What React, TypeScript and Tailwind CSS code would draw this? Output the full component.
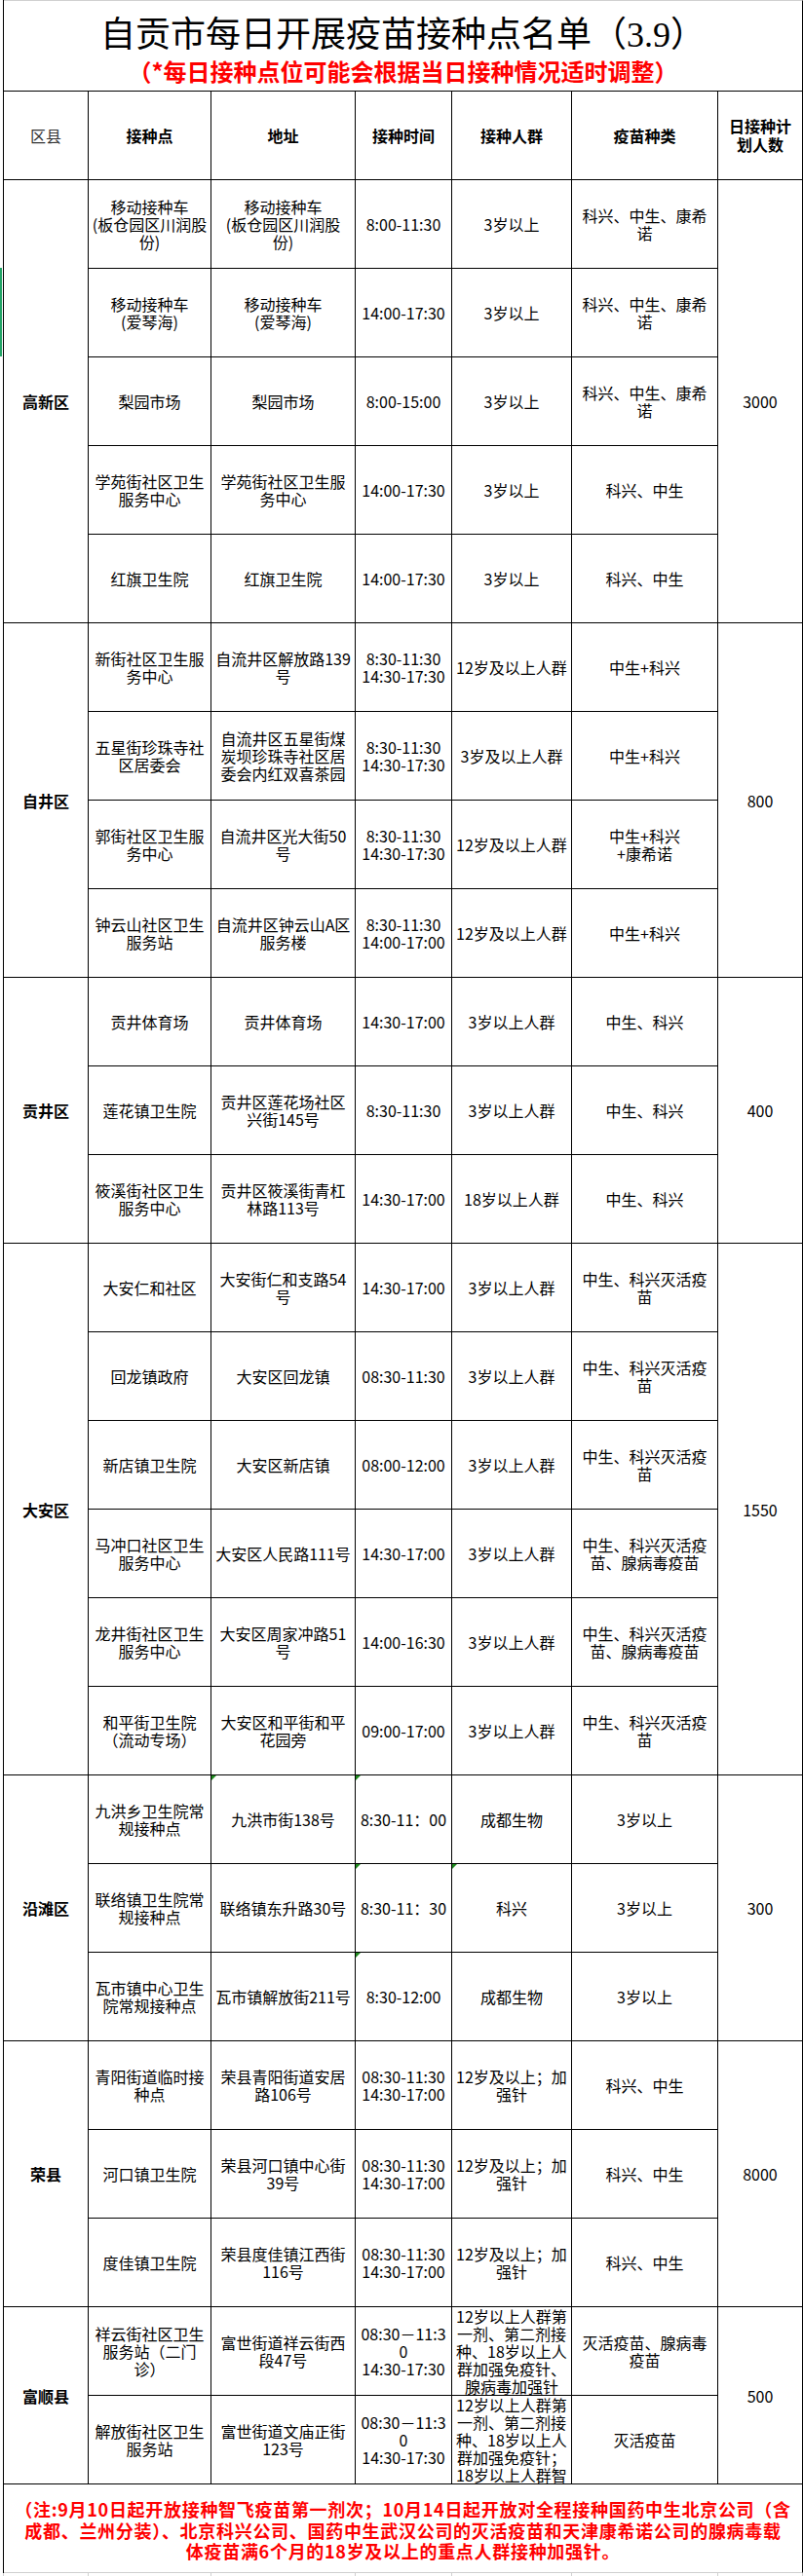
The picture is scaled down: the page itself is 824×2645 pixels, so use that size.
import React from 'react';

type Row = {
  site: string;
  addr: string;
  time: string;
  people: string;
  vaccine: string;
  marks?: number[]; // column index (0-4) with a green "number as text" corner
};

type Section = { district: string; count: string; rows: Row[] };

// lines are split on "|" so wrapping matches the sheet exactly
const SECTIONS: Section[] = [
  {
    district: '高新区', count: '3000', rows: [
      { site: '移动接种车|(板仓园区川润股|份)', addr: '移动接种车|(板仓园区川润股|份)', time: '8:00-11:30', people: '3岁以上', vaccine: '科兴、中生、康希|诺' },
      { site: '移动接种车|(爱琴海)', addr: '移动接种车|(爱琴海)', time: '14:00-17:30', people: '3岁以上', vaccine: '科兴、中生、康希|诺' },
      { site: '梨园市场', addr: '梨园市场', time: '8:00-15:00', people: '3岁以上', vaccine: '科兴、中生、康希|诺' },
      { site: '学苑街社区卫生|服务中心', addr: '学苑街社区卫生服|务中心', time: '14:00-17:30', people: '3岁以上', vaccine: '科兴、中生' },
      { site: '红旗卫生院', addr: '红旗卫生院', time: '14:00-17:30', people: '3岁以上', vaccine: '科兴、中生' },
    ],
  },
  {
    district: '自井区', count: '800', rows: [
      { site: '新街社区卫生服|务中心', addr: '自流井区解放路139|号', time: '8:30-11:30|14:30-17:30', people: '12岁及以上人群', vaccine: '中生+科兴' },
      { site: '五星街珍珠寺社|区居委会', addr: '自流井区五星街煤|炭坝珍珠寺社区居|委会内红双喜茶园', time: '8:30-11:30|14:30-17:30', people: '3岁及以上人群', vaccine: '中生+科兴' },
      { site: '郭街社区卫生服|务中心', addr: '自流井区光大街50|号', time: '8:30-11:30|14:30-17:30', people: '12岁及以上人群', vaccine: '中生+科兴|+康希诺' },
      { site: '钟云山社区卫生|服务站', addr: '自流井区钟云山A区|服务楼', time: '8:30-11:30|14:00-17:00', people: '12岁及以上人群', vaccine: '中生+科兴' },
    ],
  },
  {
    district: '贡井区', count: '400', rows: [
      { site: '贡井体育场', addr: '贡井体育场', time: '14:30-17:00', people: '3岁以上人群', vaccine: '中生、科兴' },
      { site: '莲花镇卫生院', addr: '贡井区莲花场社区|兴街145号', time: '8:30-11:30', people: '3岁以上人群', vaccine: '中生、科兴' },
      { site: '筱溪街社区卫生|服务中心', addr: '贡井区筱溪街青杠|林路113号', time: '14:30-17:00', people: '18岁以上人群', vaccine: '中生、科兴' },
    ],
  },
  {
    district: '大安区', count: '1550', rows: [
      { site: '大安仁和社区', addr: '大安街仁和支路54|号', time: '14:30-17:00', people: '3岁以上人群', vaccine: '中生、科兴灭活疫|苗' },
      { site: '回龙镇政府', addr: '大安区回龙镇', time: '08:30-11:30', people: '3岁以上人群', vaccine: '中生、科兴灭活疫|苗' },
      { site: '新店镇卫生院', addr: '大安区新店镇', time: '08:00-12:00', people: '3岁以上人群', vaccine: '中生、科兴灭活疫|苗' },
      { site: '马冲口社区卫生|服务中心', addr: '大安区人民路111号', time: '14:30-17:00', people: '3岁以上人群', vaccine: '中生、科兴灭活疫|苗、腺病毒疫苗' },
      { site: '龙井街社区卫生|服务中心', addr: '大安区周家冲路51|号', time: '14:00-16:30', people: '3岁以上人群', vaccine: '中生、科兴灭活疫|苗、腺病毒疫苗' },
      { site: '和平街卫生院|（流动专场）', addr: '大安区和平街和平|花园旁', time: '09:00-17:00', people: '3岁以上人群', vaccine: '中生、科兴灭活疫|苗' },
    ],
  },
  {
    district: '沿滩区', count: '300', rows: [
      { site: '九洪乡卫生院常|规接种点', addr: '九洪市街138号', time: '8:30-11：00', people: '成都生物', vaccine: '3岁以上', marks: [1, 2] },
      { site: '联络镇卫生院常|规接种点', addr: '联络镇东升路30号', time: '8:30-11：30', people: '科兴', vaccine: '3岁以上', marks: [2, 3] },
      { site: '瓦市镇中心卫生|院常规接种点', addr: '瓦市镇解放街211号', time: '8:30-12:00', people: '成都生物', vaccine: '3岁以上', marks: [2] },
    ],
  },
  {
    district: '荣县', count: '8000', rows: [
      { site: '青阳街道临时接|种点', addr: '荣县青阳街道安居|路106号', time: '08:30-11:30|14:30-17:00', people: '12岁及以上；加|强针', vaccine: '科兴、中生' },
      { site: '河口镇卫生院', addr: '荣县河口镇中心街|39号', time: '08:30-11:30|14:30-17:00', people: '12岁及以上；加|强针', vaccine: '科兴、中生' },
      { site: '度佳镇卫生院', addr: '荣县度佳镇江西街|116号', time: '08:30-11:30|14:30-17:00', people: '12岁及以上；加|强针', vaccine: '科兴、中生' },
    ],
  },
  {
    district: '富顺县', count: '500', rows: [
      { site: '祥云街社区卫生|服务站（二门|诊）', addr: '富世街道祥云街西|段47号', time: '08:30－11:3|0|14:30-17:30', people: '12岁以上人群第|一剂、第二剂接|种、18岁以上人|群加强免疫针、|腺病毒加强针', vaccine: '灭活疫苗、腺病毒|疫苗' },
      { site: '解放街社区卫生|服务站', addr: '富世街道文庙正街|123号', time: '08:30－11:3|0|14:30-17:30', people: '12岁以上人群第|一剂、第二剂接|种、18岁以上人|群加强免疫针；|18岁以上人群智', vaccine: '灭活疫苗' },
    ],
  },
];

const MID_COLS = ['w-[126px]', 'w-[148px]', 'w-[99px]', 'w-[123px]', 'w-[150px]'];

function Cell({ text, width, mark }: { text: string; width: string; mark?: boolean }) {
  return (
    <div className={`relative shrink-0 flex items-center justify-center border-r border-black text-center ${width}`}>
      {mark && (
        <span className="absolute left-0 top-0 h-0 w-0 border-t-[5px] border-r-[5px] border-t-[#1e8a1e] border-r-transparent" />
      )}
      <div className="whitespace-nowrap leading-[18px]">
        {text.split('|').map((l, i) => <div key={i}>{l}</div>)}
      </div>
    </div>
  );
}

function HeadCell({ children, width, className = '' }: { children: React.ReactNode; width: string; className?: string }) {
  return (
    <div className={`shrink-0 flex items-center justify-center border-r border-black text-center leading-[19px] ${width} ${className}`}>
      {children}
    </div>
  );
}

export default function App() {
  return (
    <div className="relative w-[824px] bg-white text-black text-[16px] font-['Noto_Sans_CJK_SC',sans-serif]">
      {/* selection marker in the sheet gutter */}
      <div className="absolute left-0 top-[275px] h-[91px] w-[2px] bg-[#21a366]" />

      <div className="ml-[3px] w-[821px] border-l border-black">
        {/* Title */}
        <div className="flex h-[93px] flex-col items-center border-r border-black border-t border-t-[#d0d0d0] pt-[14px]">
          <h1 className="text-[36px] leading-[42px] font-normal font-['Liberation_Serif','Noto_Sans_CJK_SC',serif]">
            自贡市每日开展疫苗接种点名单（3.9）
          </h1>
          <p className="mt-[2px] text-[24px] leading-[28px] font-bold text-[#ff0000]">
            （*每日接种点位可能会根据当日接种情况适时调整）
          </p>
        </div>

        {/* Header */}
        <div className="flex h-[92px] border-t border-b border-black font-bold">
          <HeadCell width="w-[87px]" className="font-normal text-[#333]">区县</HeadCell>
          <HeadCell width="w-[126px]">接种点</HeadCell>
          <HeadCell width="w-[148px]">地址</HeadCell>
          <HeadCell width="w-[99px]">接种时间</HeadCell>
          <HeadCell width="w-[123px]">接种人群</HeadCell>
          <HeadCell width="w-[150px]">疫苗种类</HeadCell>
          <HeadCell width="w-[87px]">
            <div>日接种计<br />划人数</div>
          </HeadCell>
        </div>

        {/* Body */}
        {SECTIONS.map(sec => (
          <div key={sec.district} className="flex">
            <div className="w-[87px] shrink-0 flex items-center justify-center border-r border-b border-black font-bold">
              {sec.district}
            </div>
            <div className="flex flex-col">
              {sec.rows.map((r, i) => {
                const vals = [r.site, r.addr, r.time, r.people, r.vaccine];
                return (
                  <div key={i} className="flex h-[91px] border-b border-black">
                    {vals.map((v, c) => (
                      <Cell key={c} text={v} width={MID_COLS[c]} mark={r.marks?.includes(c)} />
                    ))}
                  </div>
                );
              })}
            </div>
            <div className="w-[87px] shrink-0 flex items-center justify-center border-r border-b border-black">
              {sec.count}
            </div>
          </div>
        ))}

        {/* Footnote */}
        <div className="flex h-[91px] flex-col items-center border-r border-black border-b border-b-[#d0d0d0] pt-[15px] text-[18px] leading-[21.5px] font-bold tracking-[0.7px] text-[#ff0000] whitespace-nowrap">
          <div>（注:9月10日起开放接种智飞疫苗第一剂次；10月14日起开放对全程接种国药中生北京公司（含</div>
          <div>成都、兰州分装）、北京科兴公司、国药中生武汉公司的灭活疫苗和天津康希诺公司的腺病毒载</div>
          <div>体疫苗满6个月的18岁及以上的重点人群接种加强针。</div>
        </div>
      </div>

      {/* sheet gridlines below */}
      <div className="ml-[3px] flex h-[4px] w-[821px] border-l border-[#d0d0d0]">
        {['w-[87px]', 'w-[126px]', 'w-[148px]', 'w-[99px]', 'w-[123px]', 'w-[150px]', 'w-[87px]'].map((w, i) => (
          <div key={i} className={`shrink-0 border-r border-[#d0d0d0] ${w}`} />
        ))}
      </div>
    </div>
  );
}
